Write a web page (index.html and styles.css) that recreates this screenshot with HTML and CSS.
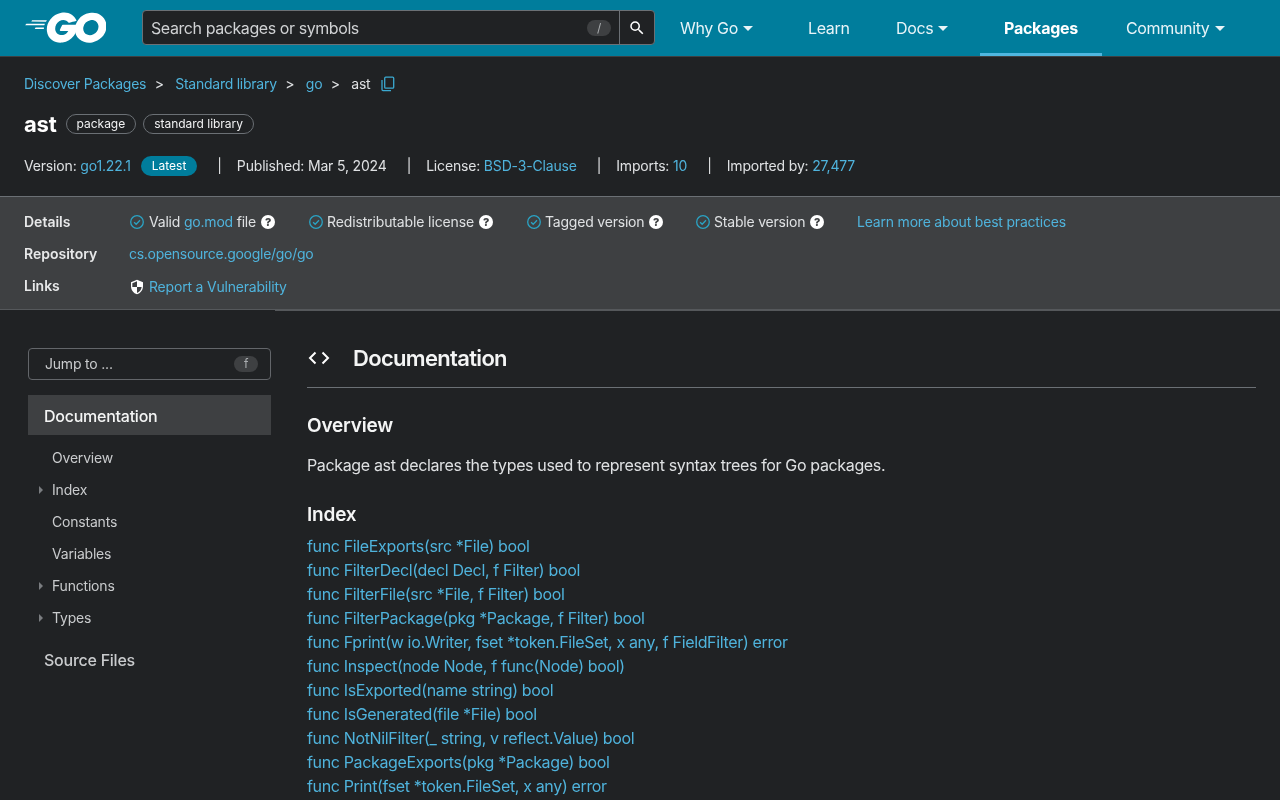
FILE: index.html
```html
<!DOCTYPE html>
<html lang="en">
<head>
    <meta charset="UTF-8">
    <title>ast package - go/ast - Go Packages</title>
    <link rel="stylesheet" href="styles.css">
</head>
<body>
<header class="header">
    <a class="logo" href="#">
        <svg width="81" height="31" viewBox="0 0 205 78" fill="#fff">
            <path d="m16.2 24.1c-.4 0-.5-.2-.3-.5l2.1-2.7c.2-.3.7-.5 1.1-.5h35.7c.4 0 .5.3.3.6l-1.7 2.6c-.2.3-.7.6-1 .6z"/>
            <path d="m1.1 33.3c-.4 0-.5-.2-.3-.5l2.1-2.7c.2-.3.7-.5 1.1-.5h45.6c.4 0 .6.3.5.6l-.8 2.4c-.1.4-.5.6-.9.6z"/>
            <path d="m25.3 42.5c-.4 0-.5-.3-.3-.6l1.4-2.5c.2-.3.6-.6 1-.6h20c.4 0 .6.3.6.7l-.2 2.4c0 .4-.4.7-.7.7z"/>
            <g transform="translate(55)">
                <path d="m74.1 22.3c-6.3 1.6-10.6 2.8-16.8 4.4-1.5.4-1.6.5-2.9-1-1.5-1.7-2.6-2.8-4.7-3.8-6.3-3.1-12.4-2.2-18.1 1.5-6.8 4.4-10.3 10.9-10.2 19 .1 8 5.6 14.6 13.5 15.7 6.8.9 12.5-1.5 17-6.6.9-1.1 1.7-2.3 2.7-3.7-3.6 0-8.1 0-19.3 0-2.1 0-2.6-1.3-1.9-3 1.3-3.1 3.7-8.3 5.1-10.9.3-.6 1-1.6 2.5-1.6h36.4c-.2 2.7-.2 5.4-.6 8.1-1.1 7.2-3.8 13.8-8.2 19.6-7.2 9.5-16.6 15.4-28.5 17-9.8 1.3-18.9-.6-26.9-6.6-7.4-5.6-11.6-13-12.7-22.2-1.3-10.9 1.9-20.7 8.5-29.3 7.1-9.3 16.5-15.2 28-17.3 9.4-1.7 18.4-.6 26.5 4.9 5.3 3.5 9.1 8.3 11.6 14.1.6.9.2 1.4-1 1.7z"/>
                <path d="m107.2 77.6c-9.1-.2-17.4-2.8-24.4-8.8-5.9-5.1-9.6-11.6-10.8-19.3-1.8-11.3 1.3-21.3 8.1-30.2 7.3-9.6 16.1-14.6 28-16.7 10.2-1.8 19.8-.8 28.5 5.1 7.9 5.4 12.8 12.7 14.1 22.3 1.7 13.5-2.2 24.5-11.5 33.9-6.6 6.7-14.7 10.9-24 12.8-2.7.5-5.4.6-8 .9zm23.8-40.4c-.1-1.3-.1-2.3-.3-3.3-1.8-9.9-10.9-15.5-20.4-13.3-9.3 2.1-15.3 8-17.5 17.4-1.8 7.8 2 15.7 9.2 18.9 5.5 2.4 11 2.1 16.3-.6 7.9-4.1 12.2-10.5 12.7-19.1z"/>
            </g>
        </svg>
    </a>
    <form class="search">
        <div class="search-input">
            <span class="search-text">Search packages or symbols</span>
            <span class="key key-slash">/</span>
        </div>
        <div class="search-btn">
            <svg width="18" height="18" viewBox="0 0 24 24" fill="#fff"><path d="M15.5 14h-.79l-.28-.27A6.47 6.47 0 0 0 16 9.5 6.5 6.5 0 1 0 9.5 16c1.61 0 3.09-.59 4.23-1.57l.27.28v.79l5 4.99L20.49 19l-4.99-5zm-6 0C7.01 14 5 11.99 5 9.5S7.01 5 9.5 5 14 7.01 14 9.5 11.99 14 9.5 14z"/></svg>
        </div>
    </form>
    <nav class="nav">
        <a class="nav-item nav-why" href="#">Why Go<i class="caret"></i></a>
        <a class="nav-item nav-learn" href="#">Learn</a>
        <a class="nav-item nav-docs" href="#">Docs<i class="caret"></i></a>
        <a class="nav-item nav-packages nav-selected" href="#">Packages</a>
        <a class="nav-item nav-community" href="#">Community<i class="caret"></i></a>
    </nav>
</header>

<section class="unit-header">
    <div class="crumbs">
        <a href="#">Discover Packages</a><span class="crumb-sep">&gt;</span>
        <a href="#">Standard library</a><span class="crumb-sep">&gt;</span>
        <a href="#">go</a><span class="crumb-sep">&gt;</span>
        <span>ast</span>
        <svg class="copy" width="16" height="16" viewBox="0 0 16 16" fill="none" stroke="#3ba9d0" stroke-width="1.3"><rect x="4.7" y="1.2" width="9" height="11" rx="1"/><path d="M2 4v9.6a1 1 0 0 0 1 1h8"/></svg>
    </div>
    <div class="title-row">
        <h1>ast</h1>
        <span class="chip">package</span>
        <span class="chip">standard library</span>
    </div>
    <div class="meta">
        <span>Version: <a href="#">go1.22.1</a></span>
        <span class="latest">Latest</span>
        <span class="meta-sep">|</span>
        <span>Published: Mar 5, 2024</span>
        <span class="meta-sep">|</span>
        <span>License: <a href="#">BSD-3-Clause</a></span>
        <span class="meta-sep">|</span>
        <span>Imports: <a href="#">10</a></span>
        <span class="meta-sep">|</span>
        <span>Imported by: <a href="#">27,477</a></span>
    </div>
</section>

<section class="details">
    <div class="details-row">
        <strong>Details</strong>
        <div class="checks">
            <span class="check check-mod"><svg class="tick" viewBox="0 0 14 14"><circle cx="7" cy="7" r="6.3"/><path d="M4.1 7.2l2.1 2.1 3.8-4"/></svg>Valid <a href="#">go.mod</a> file<svg class="help" viewBox="0 0 14 14"><circle cx="7" cy="7" r="7"/><text x="7" y="10.8" text-anchor="middle">?</text></svg></span>
            <span class="check check-lic"><svg class="tick" viewBox="0 0 14 14"><circle cx="7" cy="7" r="6.3"/><path d="M4.1 7.2l2.1 2.1 3.8-4"/></svg>Redistributable license<svg class="help" viewBox="0 0 14 14"><circle cx="7" cy="7" r="7"/><text x="7" y="10.8" text-anchor="middle">?</text></svg></span>
            <span class="check check-tag"><svg class="tick" viewBox="0 0 14 14"><circle cx="7" cy="7" r="6.3"/><path d="M4.1 7.2l2.1 2.1 3.8-4"/></svg>Tagged version<svg class="help" viewBox="0 0 14 14"><circle cx="7" cy="7" r="7"/><text x="7" y="10.8" text-anchor="middle">?</text></svg></span>
            <span class="check check-stable"><svg class="tick" viewBox="0 0 14 14"><circle cx="7" cy="7" r="6.3"/><path d="M4.1 7.2l2.1 2.1 3.8-4"/></svg>Stable version<svg class="help" viewBox="0 0 14 14"><circle cx="7" cy="7" r="7"/><text x="7" y="10.8" text-anchor="middle">?</text></svg></span>
            <a href="#">Learn more about best practices</a>
        </div>
    </div>
    <div class="details-row">
        <strong>Repository</strong>
        <a class="repo-link" href="#">cs.opensource.google/go/go</a>
    </div>
    <div class="details-row row-links">
        <strong>Links</strong>
        <span class="vuln">
            <svg width="16" height="16" viewBox="0 0 24 24" fill="#fff"><path d="M12 1L3 5v6c0 5.55 3.84 10.74 9 12 5.16-1.26 9-6.45 9-12V5l-9-4zm0 10.99h7c-.53 4.12-3.28 7.79-7 8.94V12H5V6.3l7-3.11v8.8z"/></svg>
            <a href="#">Report a Vulnerability</a>
        </span>
    </div>
</section>

<main class="main">
    <aside class="side">
        <div class="jump">
            <span>Jump to ...</span>
            <span class="key key-f">f</span>
        </div>
        <div class="side-head side-active">Documentation</div>
        <ul class="side-list">
            <li>Overview</li>
            <li class="has-kids">Index</li>
            <li>Constants</li>
            <li>Variables</li>
            <li class="has-kids">Functions</li>
            <li class="has-kids">Types</li>
        </ul>
        <div class="side-head side-files">Source Files</div>
    </aside>
    <article class="doc">
        <div class="doc-head">
            <svg width="22" height="14" viewBox="0 0 22 14" fill="none" stroke="#fff" stroke-width="2"><path d="M7.5 1.5L2 7l5.5 5.5"/><path d="M14.5 1.5L20 7l-5.5 5.5"/></svg>
            <h2>Documentation</h2>
        </div>
        <h3 class="h-overview">Overview</h3>
        <p>Package ast declares the types used to represent syntax trees for Go packages.</p>
        <h3 class="h-index">Index</h3>
        <ul class="funcs">
            <li><a href="#">func FileExports(src *File) bool</a></li>
            <li><a href="#">func FilterDecl(decl Decl, f Filter) bool</a></li>
            <li><a href="#">func FilterFile(src *File, f Filter) bool</a></li>
            <li><a href="#">func FilterPackage(pkg *Package, f Filter) bool</a></li>
            <li><a href="#">func Fprint(w io.Writer, fset *token.FileSet, x any, f FieldFilter) error</a></li>
            <li><a href="#">func Inspect(node Node, f func(Node) bool)</a></li>
            <li><a href="#">func IsExported(name string) bool</a></li>
            <li><a href="#">func IsGenerated(file *File) bool</a></li>
            <li><a href="#">func NotNilFilter(_ string, v reflect.Value) bool</a></li>
            <li><a href="#">func PackageExports(pkg *Package) bool</a></li>
            <li><a href="#">func Print(fset *token.FileSet, x any) error</a></li>
        </ul>
    </article>
</main>
</body>
</html>
```
FILE: styles.css
```css
*{
    margin: 0;
    padding: 0;
    box-sizing: border-box;
}
html,body{
    height: 800px;
    overflow: hidden;
}
body{
    background-color: #202224;
    color: #dfe1e3;
    font-family: Inter, "Noto Sans", sans-serif;
    font-size: 14px;
    line-height: 24px;
    letter-spacing: -0.2px;
}
a{
    color: #4fb3dc;
    text-decoration: none;
}
li{
    list-style: none;
}

/* text layers without a background of their own, keeps the text antialiasing grey */
.nav,
.search-input,
.unit-header,
.details-row,
.main{
    will-change: transform;
}

/* header */
.header{
    display: flex;
    align-items: center;
    height: 57px;
    padding-left: 25px;
    background-color: #007d9c;
    border-bottom: 1px solid #3e4042;
}
.logo{
    display: flex;
    width: 117px;
    margin-top: -1px;
}
.search{
    display: flex;
    width: 513px;
    height: 35px;
    margin-top: -1px;
    background-color: #202224;
    border: 1px solid #6b7075;
    border-radius: 4px;
}
.search-input{
    display: flex;
    align-items: center;
    justify-content: space-between;
    flex: 1;
    padding: 0 8px;
    border-right: 1px solid #6b7075;
    color: #d0d2d4;
    font-size: 16px;
    letter-spacing: -0.42px;
}
.search-btn{
    display: flex;
    align-items: center;
    justify-content: center;
    width: 34px;
}
.key{
    display: block;
    width: 24px;
    height: 16px;
    border-radius: 8px;
    background-color: #3e4042;
    color: #aaadb0;
    font-size: 12px;
    line-height: 16px;
    text-align: center;
}
.nav{
    display: flex;
    height: 56px;
    margin-left: 1px;
}
.nav-item{
    display: flex;
    align-items: center;
    padding-left: 24px;
    padding-top: 2px;
    color: #e8f4f8;
    font-size: 16px;
    letter-spacing: -0.35px;
    border-bottom: 3px solid transparent;
}
.nav-why{
    width: 128px;
}
.nav-learn{
    width: 88px;
}
.nav-docs{
    width: 108px;
}
.nav-packages{
    width: 122px;
    font-weight: 700;
    color: #fff;
    letter-spacing: -0.25px;
}
.nav-selected{
    border-bottom-color: #50b7e0;
}
.caret{
    width: 0;
    height: 0;
    margin-left: 5px;
    margin-top: 1px;
    border-left: 5px solid transparent;
    border-right: 5px solid transparent;
    border-top: 5px solid #e8f4f8;
}

/* unit header */
.unit-header{
    height: 139px;
    padding: 15px 24px 0;
}
.crumbs{
    display: flex;
    align-items: center;
    height: 24px;
    letter-spacing: -0.25px;
}
.crumb-sep{
    margin: 0 11.5px 0 8.5px;
}
.copy{
    margin-left: 10px;
}
.title-row{
    display: flex;
    align-items: center;
    height: 32px;
    margin-top: 12px;
}
.title-row h1{
    color: #fff;
    font-size: 22px;
    font-weight: 700;
    margin-right: 9px;
}
.chip{
    height: 20px;
    margin-right: 7px;
    padding: 0 10px;
    border: 1px solid #6b7075;
    border-radius: 10px;
    font-size: 12px;
    line-height: 18px;
    color: #f0f1f2;
    letter-spacing: -0.02px;
}
.meta{
    display: flex;
    align-items: center;
    height: 24px;
    margin-top: 14px;
    letter-spacing: -0.17px;
}
.latest{
    height: 20px;
    margin-left: 10px;
    padding: 0 11px;
    border-radius: 10px;
    background-color: #007d9c;
    color: #fff;
    font-size: 12px;
    line-height: 20px;
    letter-spacing: 0;
}
.meta-sep{
    margin: 0 15px 0 20px;
}

/* details */
.details{
    position: relative;
    height: 115px;
    padding: 9px 24px 0;
    background-color: #3e4042;
    border-top: 1px solid #6b7075;
    border-bottom: 2px solid #55585b;
}
.details::after{
    content: "";
    position: absolute;
    left: 0;
    bottom: -2px;
    width: 275px;
    height: 1px;
    background-color: #202224;
}
.details-row{
    display: flex;
    align-items: center;
    height: 32px;
}
.details-row strong{
    width: 105px;
    font-weight: 600;
    color: #e8e9ea;
    letter-spacing: 0;
}
.repo-link{
    letter-spacing: -0.28px;
}
.checks{
    display: flex;
    align-items: center;
    padding-left: 1px;
}
.check{
    display: flex;
    align-items: center;
    white-space: pre;
}
.check-mod{
    width: 179px;
}
.check-mod .tick{
    margin-right: 5px;
}
.check-lic{
    width: 218px;
    letter-spacing: -0.13px;
}
.check-tag{
    width: 169px;
}
.check-stable{
    width: 161px;
}
.tick{
    width: 14px;
    height: 14px;
    margin-right: 4px;
    fill: none;
    stroke: #2aa3c4;
    stroke-width: 1.3;
}
.help{
    width: 14px;
    height: 14px;
    margin-left: 5px;
}
.help circle{
    fill: #fff;
}
.help text{
    fill: #3e4042;
    font-size: 11px;
    font-weight: 800;
}
.vuln{
    display: flex;
    align-items: center;
    gap: 4px;
    margin-top: 1px;
}

/* main */
.main{
    display: grid;
    grid-template-columns: 243px 1fr;
    column-gap: 36px;
    padding: 0 24px 0 28px;
}
.jump{
    display: flex;
    align-items: center;
    justify-content: space-between;
    height: 32px;
    margin-top: 37px;
    padding: 0 12px 0 16px;
    border: 1px solid #63666a;
    border-radius: 4px;
    color: #c9cbcd;
}
.side-head{
    font-size: 16px;
    font-weight: 500;
    padding-left: 16px;
    letter-spacing: -0.25px;
}
.side-active{
    height: 40px;
    margin-top: 15px;
    line-height: 42px;
    background-color: #3e4042;
    color: #f4f5f5;
}
.side-list{
    margin-top: 7px;
}
.side-list li{
    position: relative;
    height: 32px;
    padding-left: 24px;
    line-height: 32px;
    color: #c9cbcd;
}
.has-kids::before{
    content: "";
    position: absolute;
    left: 11px;
    top: 12px;
    border-top: 4px solid transparent;
    border-bottom: 4px solid transparent;
    border-left: 4px solid #7a7d80;
}
.side-files{
    margin-top: 10px;
    line-height: 32px;
    color: #c9cbcd;
}
.doc-head{
    display: flex;
    align-items: center;
    gap: 23px;
    height: 77px;
    padding: 18px 0 0 1px;
    border-bottom: 1px solid #6b7075;
}
.doc-head h2{
    color: #f4f5f5;
    font-size: 22px;
    font-weight: 600;
    letter-spacing: -0.68px;
}
.doc h3{
    color: #f4f5f5;
    font-size: 19px;
    font-weight: 600;
}
.h-overview{
    margin-top: 26px;
}
.doc p{
    margin-top: 15px;
    font-size: 16px;
    letter-spacing: -0.35px;
}
.h-index{
    margin-top: 26px;
}
.funcs{
    margin-top: 7px;
    font-size: 16px;
    letter-spacing: -0.35px;
}
```
